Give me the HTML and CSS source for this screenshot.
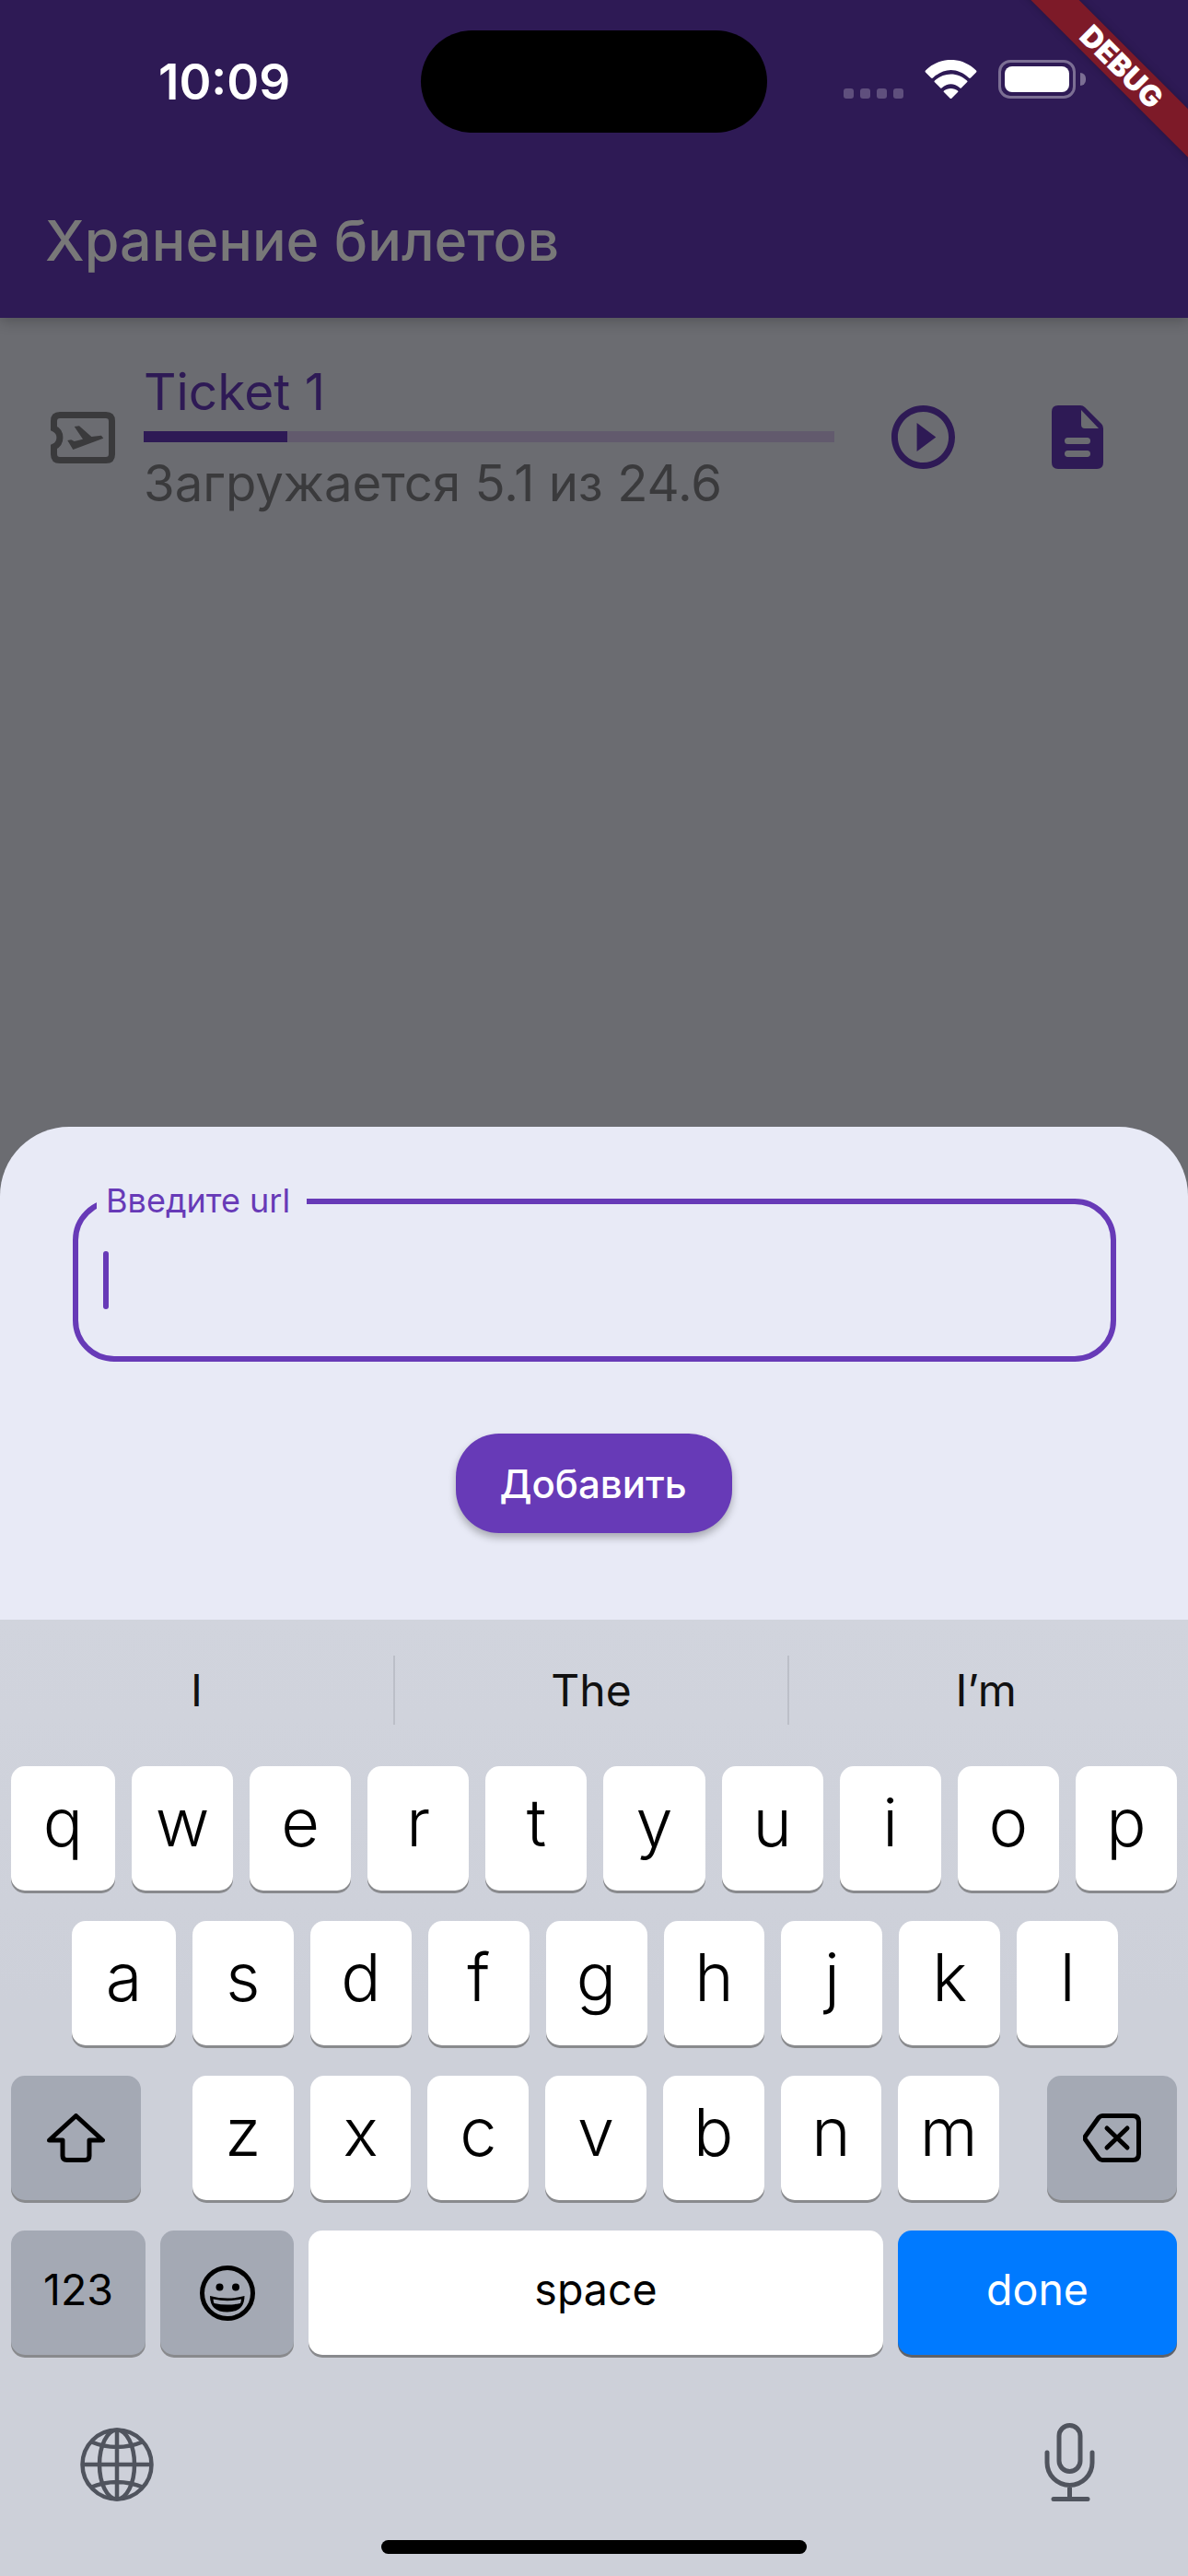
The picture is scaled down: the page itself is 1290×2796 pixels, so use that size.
FILE: index.html
```html
<!DOCTYPE html>
<html lang="ru">
<head>
    <meta charset="UTF-8">
    <meta name="viewport" content="width=device-width, initial-scale=1.0">
    <title>Хранение билетов</title>
    <link rel="stylesheet" href="styles.css">
</head>
<body>
<div class="screen">
    <header class="app-header">
        <div class="status-bar">
            <div class="status-time">10:09</div>
            <div class="island"></div>
            <div class="status-icons">
                <div class="signal-dots"><span></span><span></span><span></span><span></span></div>
                <svg class="wifi-icon" viewBox="0 0 57 42">
                    <path d="M1 11.5C17-4 40-4 56 11.500a1.500 1.500 0 0 1 0 2L50 19.500a1.500 1.500 0 0 1-2 0C36 8 21 8 9 19.500a1.500 1.500 0 0 1-2 0L1 13.500a1.500 1.500 0 0 1 0-2z"/>
                    <path d="M11 22.500C21 13 36 13 46 22.500a1.200 1.200 0 0 1 0 1.800L40 30.300a1.200 1.200 0 0 1-1.800 0C32 25 25 25 18.800 30.300a1.200 1.200 0 0 1-1.800 0L11 24.300a1.200 1.200 0 0 1 0-1.800z"/>
                    <path d="M21 33.500C25 30 32 30 36 33.500a1 1 0 0 1 0 1.500L29.300 41.700a1 1 0 0 1-1.600 0L21 35a1 1 0 0 1 0-1.500z"/>
                </svg>
                <div class="battery">
                    <div class="battery-body"><div class="battery-level"></div></div>
                    <div class="battery-nub"></div>
                </div>
            </div>
        </div>
        <h1 class="app-title">Хранение билетов</h1>
    </header>

    <main class="ticket-list">
        <div class="ticket-row">
            <svg class="ticket-icon" viewBox="0 0 70 56">
                <path class="ticket-outline" d="M10 3.500H60Q66.500 3.500 66.500 10V46Q66.500 52.500 60 52.500H10Q3.500 52.500 3.500 46V38A11 11 0 0 0 3.500 18V10Q3.500 3.500 10 3.500Z"/>
                <path d="M18.300 31L22.300 30.300L25.700 32L35 29.700L25.700 16L31 15.300L44.300 27L55 25.700L57.300 28.700L24.300 41Z"/>
            </svg>
            <div class="ticket-info">
                <div class="ticket-name">Ticket 1</div>
                <div class="progress-track"><div class="progress-fill" style="width: 20.800%"></div></div>
                <div class="ticket-status">Загружается 5.1 из 24.6</div>
            </div>
            <svg class="play-icon" viewBox="2 2 20 20">
                <path d="M10 16.500l6-4.500-6-4.500v9zM12 2C6.480 2 2 6.480 2 12s4.480 10 10 10 10-4.480 10-10S17.520 2 12 2zm0 18c-4.410 0-8-3.590-8-8s3.590-8 8-8 8 3.590 8 8-3.590 8-8 8z"/>
            </svg>
            <svg class="doc-icon" viewBox="0 0 56 69">
                <path fill-rule="evenodd" d="M7 0H31Q34 0 36 2L54 20Q56 22 56 25V62Q56 69 49 69H7Q0 69 0 62V7Q0 0 7 0ZM32 5V21Q32 25 36 25H51ZM17.500 35a3.500 3.500 0 0 0 0 7H38.500a3.500 3.500 0 0 0 0-7ZM17.500 49a3.500 3.500 0 0 0 0 7H38.500a3.500 3.500 0 0 0 0-7Z"/>
            </svg>
        </div>
    </main>

    <section class="sheet">
        <fieldset class="url-field">
            <legend class="url-label">Введите url</legend>
            <div class="caret"></div>
        </fieldset>
        <button class="add-button">Добавить</button>
    </section>

    <section class="keyboard">
        <div class="suggestions">
            <div class="suggestion">I</div>
            <div class="suggestion">The</div>
            <div class="suggestion">I’m</div>
        </div>
        <div class="key-rows">
            <div class="key-row row-top">
                <div class="key">q</div><div class="key">w</div><div class="key">e</div><div class="key">r</div><div class="key">t</div>
                <div class="key">y</div><div class="key">u</div><div class="key">i</div><div class="key">o</div><div class="key">p</div>
            </div>
            <div class="key-row row-middle">
                <div class="key">a</div><div class="key">s</div><div class="key">d</div><div class="key">f</div><div class="key">g</div>
                <div class="key">h</div><div class="key">j</div><div class="key">k</div><div class="key">l</div>
            </div>
            <div class="key-row row-third">
                <div class="key key-gray key-shift">
                    <svg class="shift-icon" viewBox="0 0 63 53">
                        <path d="M31.500 2.500L60.500 29H46V46Q46 50.500 41.500 50.500H21.500Q17 50.500 17 46V29H2.500Z"/>
                    </svg>
                </div>
                <div class="letter-group">
                    <div class="key">z</div><div class="key">x</div><div class="key">c</div><div class="key">v</div>
                    <div class="key">b</div><div class="key">n</div><div class="key">m</div>
                </div>
                <div class="key key-gray key-shift">
                    <svg class="shift-icon" viewBox="0 0 63 53">
                        <path d="M21 2.500H54Q60.500 2.500 60.500 9V44Q60.500 50.500 54 50.500H21Q19 50.500 17 48.500L3 29Q1 26.500 3 24L17 4.500Q19 2.500 21 2.500Z"/>
                        <path d="M26 16L48 37M48 16L26 37"/>
                    </svg>
                </div>
            </div>
            <div class="key-row row-bottom">
                <div class="key key-gray key-small key-123">123</div>
                <div class="key key-gray key-emoji">
                    <svg class="emoji-icon" viewBox="0 0 60 60">
                        <circle class="emoji-face" cx="30" cy="30" r="27.500"/>
                        <circle cx="21.500" cy="23.500" r="4"/>
                        <circle cx="39" cy="23.500" r="4"/>
                        <path d="M11 33Q30 38 48.500 33Q48.500 50.500 29.800 50.500Q11 50.500 11 33Z"/>
                        <path class="emoji-teeth" d="M14.500 36.500Q30 40 45 36.500Q44.800 39 44 41Q30 44 15.500 41Q14.700 39 14.500 36.500Z"/>
                    </svg>
                </div>
                <div class="key key-small key-space">space</div>
                <div class="key key-small key-done">done</div>
            </div>
        </div>
        <div class="keyboard-tools">
            <svg class="globe-icon" viewBox="0 0 80 80">
                <circle cx="40" cy="40" r="37.500"/>
                <ellipse cx="40" cy="40" rx="19" ry="37.500"/>
                <path d="M40 2.500V77.500M2.500 40H77.500M11 15Q40 27 69 15M11 65Q40 53 69 65"/>
            </svg>
            <svg class="mic-icon" viewBox="0 0 55 85">
                <rect x="16" y="2.500" width="23" height="50" rx="11.500"/>
                <path d="M3 32V43A24.500 24.500 0 0 0 52 43V32M27.500 68V81M10 82.500H47"/>
            </svg>
        </div>
        <div class="home-bar"></div>
    </section>

    <div class="debug-banner">DEBUG</div>
</div>
</body>
</html>
```

FILE: styles.css
```css
* {
    box-sizing: border-box;
}

body {
    margin: 0;
    font-family: Inter, "Noto Sans", sans-serif;
}

.screen {
    position: relative;
    display: flex;
    flex-direction: column;
    width: 1290px;
    height: 2796px;
    overflow: hidden;
    background-color: #6b6c71;
}

/* header */
.app-header {
    position: relative;
    flex: none;
    height: 345px;
    background-color: #2e1a55;
    box-shadow: 0 4px 14px rgba(0, 0, 0, 0.22);
}

.status-bar {
    display: flex;
    align-items: flex-start;
    padding: 33px 0 0 172px;
}

.status-time {
    width: 285px;
    margin-top: 26px;
    color: #fff;
    font-size: 53px;
    font-weight: 600;
    line-height: 60px;
}

.island {
    width: 376px;
    height: 111px;
    border-radius: 56px;
    background-color: #000;
}

.status-icons {
    display: flex;
    align-items: flex-end;
    margin: 32px 0 0 83px;
}

.signal-dots {
    display: flex;
    gap: 7px;
}

.signal-dots span {
    width: 11px;
    height: 11px;
    border-radius: 3px;
    background-color: #5f4f7d;
}

.wifi-icon {
    width: 57px;
    height: 42px;
    margin-left: 23px;
    fill: #fff;
}

.battery {
    display: flex;
    align-items: center;
    margin-left: 23px;
}

.battery-body {
    width: 84px;
    height: 42px;
    padding: 4px;
    border: 3px solid #7c6f94;
    border-radius: 13px;
}

.battery-level {
    height: 100%;
    border-radius: 8px;
    background-color: #fff;
}

.battery-nub {
    width: 6px;
    height: 14px;
    margin-left: 5px;
    border-radius: 0 6px 6px 0;
    background-color: #7c6f94;
}

.app-title {
    margin: 83px 0 0 49px;
    color: #787878;
    font-size: 61px;
    font-weight: 500;
    line-height: 68px;
}

/* ticket list */
.ticket-list {
    flex: 1;
    padding-top: 48px;
}

.ticket-row {
    display: flex;
    align-items: center;
    padding-left: 55px;
}

.ticket-icon {
    flex: none;
    width: 70px;
    height: 56px;
    margin-right: 31px;
    fill: #3a3a3c;
}

.ticket-outline {
    fill: none;
    stroke: #3a3a3c;
    stroke-width: 7;
}

.ticket-info {
    width: 750px;
}

.ticket-name {
    color: #2e1a55;
    font-size: 55px;
    line-height: 64px;
}

.progress-track {
    height: 12px;
    margin-top: 11px;
    background-color: #625a6d;
}

.progress-fill {
    height: 100%;
    background-color: #2e1a55;
}

.ticket-status {
    margin-top: 12px;
    color: #3a3a3c;
    font-size: 54.500px;
    line-height: 64px;
}

.play-icon {
    flex: none;
    width: 69px;
    height: 69px;
    margin-left: 62px;
    fill: #2e1a55;
}

.doc-icon {
    flex: none;
    width: 56px;
    height: 69px;
    margin-left: 105px;
    fill: #2e1a55;
}

/* bottom sheet */
.sheet {
    display: flex;
    flex: none;
    flex-direction: column;
    align-items: center;
    height: 535px;
    padding: 58px 78px 0 79px;
    border-radius: 75px 75px 0 0;
    background-color: #e8eaf6;
}

.url-field {
    width: 100%;
    height: 197px;
    min-width: 0;
    margin: 0;
    padding: 31px 0 0 27px;
    border: 6px solid #673ab7;
    border-radius: 45px;
}

.url-label {
    margin-left: -7px;
    padding: 0 18px 2px 10px;
    color: #673ab7;
    font-size: 36px;
    line-height: 44px;
}

.caret {
    width: 6px;
    height: 63px;
    border-radius: 3px;
    background-color: #673ab7;
}

.add-button {
    flex: none;
    width: 300px;
    height: 108px;
    margin: 78px 1px 0 0;
    padding: 0 2px 0 0;
    border: 0;
    border-radius: 47px;
    color: #fff;
    background-color: #673ab7;
    box-shadow: 0 5px 9px rgba(0, 0, 0, 0.28);
    font-family: inherit;
    font-size: 42px;
    font-weight: 500;
}

/* keyboard */
.keyboard {
    flex: none;
    height: 1038px;
    background: linear-gradient(#d1d4dd, #cdd0d9 40%);
}

.suggestions {
    display: flex;
    padding: 39px 6px 0 0;
}

.suggestion {
    flex: 1;
    height: 75px;
    color: #111;
    font-size: 48px;
    line-height: 75px;
    text-align: center;
}

.suggestion + .suggestion {
    border-left: 2px solid #bcbfc8;
}

.key-rows {
    display: flex;
    flex-direction: column;
    gap: 33px;
    margin-top: 45px;
}

.key-row {
    display: flex;
    gap: 18px;
    height: 135px;
}

.row-top {
    padding: 0 12px;
}

.row-middle {
    padding: 0 76px 0 78px;
}

.row-top .key:first-child,
.row-middle .key:first-child {
    flex: none;
    width: 113px;
}

.row-third {
    justify-content: space-between;
    padding: 0 12px;
}

.row-bottom {
    gap: 16px;
    padding: 0 12px;
}

.letter-group {
    display: flex;
    flex: none;
    gap: 18px;
    width: 876px;
    margin-left: 4px;
}

.key {
    display: flex;
    flex: 1;
    justify-content: center;
    height: 135px;
    border-radius: 15px;
    color: #000;
    background-color: #fff;
    box-shadow: 0 3px 0 #898a8d;
    font-size: 72px;
    font-weight: 300;
    line-height: 122px;
}

.key-gray {
    background-color: #a4a9b4;
}

.key-shift {
    flex: none;
    align-items: center;
    width: 141px;
}

.shift-icon {
    width: 63px;
    height: 53px;
    fill: none;
    stroke: #000;
    stroke-width: 5;
    stroke-linecap: round;
    stroke-linejoin: round;
}

.key-small {
    font-size: 46.500px;
    font-weight: 400;
    line-height: 128px;
}

.key-123 {
    flex: none;
    width: 146px;
}

.key-emoji {
    flex: none;
    align-items: center;
    width: 145px;
}

.emoji-icon {
    width: 60px;
    height: 60px;
    fill: #000;
}

.emoji-face {
    fill: none;
    stroke: #000;
    stroke-width: 5;
}

.emoji-teeth {
    fill: #a4a9b4;
}

.key-space {
    flex: none;
    width: 624px;
}

.key-done {
    flex: none;
    width: 303px;
    color: #fff;
    background-color: #007aff;
    box-shadow: 0 3px 0 #5f6268;
}

.keyboard-tools {
    display: flex;
    align-items: flex-end;
    justify-content: space-between;
    height: 80px;
    margin-top: 79px;
    padding: 0 101px 0 87px;
}

.globe-icon {
    width: 80px;
    height: 80px;
    fill: none;
    stroke: #50545e;
    stroke-width: 4.500;
}

.mic-icon {
    width: 55px;
    height: 85px;
    fill: none;
    stroke: #50545e;
    stroke-width: 5;
    stroke-linecap: round;
}

.home-bar {
    width: 462px;
    height: 15px;
    margin: 42px auto 0 414px;
    border-radius: 8px;
    background-color: #000;
}

/* debug ribbon */
.debug-banner {
    position: absolute;
    top: 54px;
    left: 1048px;
    width: 340px;
    height: 37px;
    color: #fff;
    background-color: #7d1a28;
    box-shadow: 0 0 8px rgba(0, 0, 0, 0.25);
    font-size: 32px;
    font-weight: 900;
    line-height: 37px;
    text-align: center;
    transform: rotate(45deg);
}
```
